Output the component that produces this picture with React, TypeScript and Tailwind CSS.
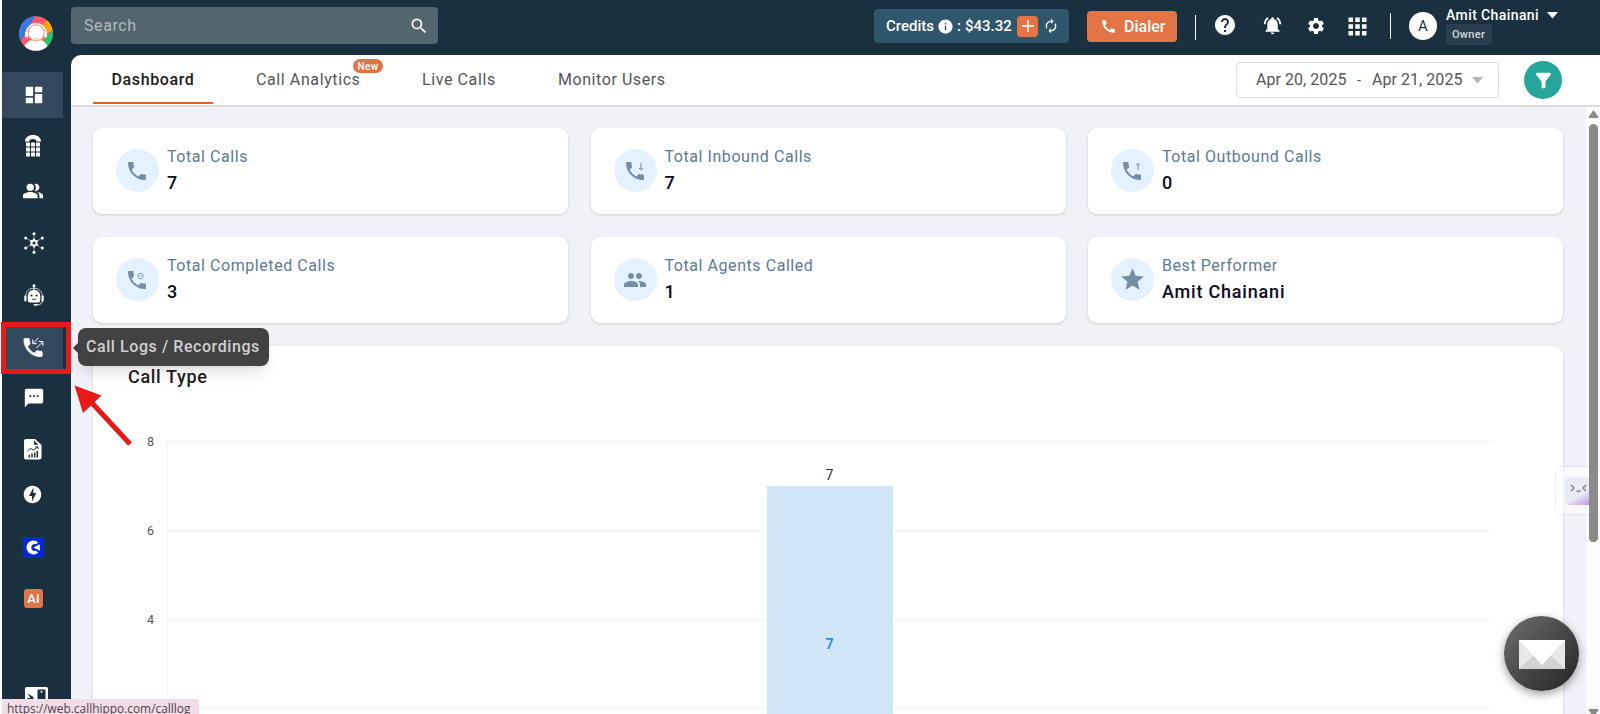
import React from 'react';
import {
  MdApps,
  MdAutorenew,
  MdCall,
  MdDashboard,
  MdFilterAlt,
  MdHelp,
  MdInfo,
  MdNotificationsActive,
  MdOfflineBolt,
  MdPeople,
  MdPeopleAlt,
  MdSearch,
  MdSettings,
  MdSms,
  MdStar,
} from 'react-icons/md';

const PHONE_PATH =
  'M6.62 10.79c1.44 2.83 3.76 5.14 6.59 6.59l2.2-2.2c.27-.27.67-.36 1.02-.24 1.12.37 2.33.57 3.57.57.55 0 1 .45 1 1V20c0 .55-.45 1-1 1-9.39 0-17-7.61-17-17 0-.55.45-1 1-1h3.5c.55 0 1 .45 1 1 0 1.25.2 2.45.57 3.57.11.35.03.74-.25 1.02l-2.2 2.2z';

const Logo: React.FC = () => (
  <svg width="34" height="35" viewBox="0 0 34 35">
    <defs>
      <clipPath id="logo-clip">
        <ellipse cx="17" cy="17.5" rx="17" ry="17.3" />
      </clipPath>
    </defs>
    <g clipPath="url(#logo-clip)">
      <rect width="34" height="35" fill="#ff5a6a" />
      <path d="M0 0h16L3 24H0z" fill="#3b78e7" />
      <path d="M30 2l4 8v5l-10 3-2-8z" fill="#ffa60d" />
      <path d="M34 13v22H20l6-13z" fill="#27c26c" />
      <path d="M5 32c1-6 6-8.500 12-8.500S28 26 29 32v3H5z" fill="#fff" />
      <path d="M7.200 18.500a9.800 10.500 0 0 1 19.800 0" fill="none" stroke="#fff" strokeWidth="1.800" />
      <rect x="6.300" y="15.500" width="3" height="6" rx="1.500" fill="#fff" />
      <rect x="25" y="15.500" width="3" height="6" rx="1.500" fill="#fff" />
      <circle cx="17.200" cy="16.800" r="8" fill="#fff" stroke="#ff7f7f" strokeWidth="0.900" />
      <path d="M25.500 20.500c-1 2.500-3 3.500-6 3.700" fill="none" stroke="#ffc04d" strokeWidth="0.800" />
      <rect x="15.500" y="22.300" width="4.500" height="2.200" rx="1.100" fill="#fff" stroke="#ffa64d" strokeWidth="0.600" />
    </g>
  </svg>
);

const KeypadIcon: React.FC = () => (
  <svg width="16" height="22" viewBox="0 0 16 22" fill="#fff">
    <path d="M0 6.500C0 2.500 3.500 0 8 0s8 2.500 8 6.500h-4.300C11.700 4.800 10 4 8 4s-3.700.8-3.700 2.500z" />
    {[7.4, 12.4, 17.4].map((y) =>
      [1, 6, 11].map((x) => <rect key={`${x}-${y}`} x={x} y={y} width="4" height="4" rx="0.500" />)
    )}
  </svg>
);

const HubIcon: React.FC = () => (
  <svg width="20" height="22" viewBox="0 0 20 22" fill="#fff" stroke="#fff">
    <path d="M10 2v18M2 6l16 10M18 6L2 16" strokeWidth="0.600" fill="none" opacity="0.800" />
    <path d="M10 6.500v9M6.100 8.700l7.800 4.600M13.900 8.700l-7.800 4.600" strokeWidth="1.800" fill="none" />
    <circle cx="10" cy="11" r="2.500" fill="#1b303f" strokeWidth="1.900" />
    <g stroke="none">
      <circle cx="10" cy="1.700" r="1.500" />
      <circle cx="10" cy="20.300" r="1.500" />
      <circle cx="1.700" cy="6" r="1.500" />
      <circle cx="18.300" cy="6" r="1.500" />
      <circle cx="1.700" cy="16" r="1.500" />
      <circle cx="18.300" cy="16" r="1.500" />
    </g>
  </svg>
);

const BotIcon: React.FC = () => (
  <svg width="20" height="22" viewBox="0 0 20 22" fill="#fff">
    <circle cx="10" cy="1.700" r="1.500" />
    <rect x="9.500" y="2" width="1" height="4" />
    <path d="M3.800 12.500C3.800 8 6.200 6 10 6s6.200 2 6.200 6.500v3.700c0 1.500-1 2.300-2.300 2.300H6.100c-1.300 0-2.300-.8-2.300-2.300z" />
    <path d="M1.700 12C2 7 5 4.300 10 4.300S18 7 18.300 12" fill="none" stroke="#fff" strokeWidth="0.700" />
    <rect x="0.300" y="11.500" width="2.200" height="6" rx="1" />
    <rect x="17.500" y="11.500" width="2.200" height="6" rx="1" />
    <circle cx="7.500" cy="11.500" r="1.100" fill="#1b303f" />
    <circle cx="12.500" cy="11.500" r="1.100" fill="#1b303f" />
    <path d="M8 15q2 1.200 4 0" fill="none" stroke="#1b303f" strokeWidth="0.900" />
    <path d="M18.200 17c0 3-3 4-7 4" fill="none" stroke="#fff" strokeWidth="0.900" />
    <rect x="9.500" y="20" width="4" height="1.600" rx="0.800" />
  </svg>
);

const CallLogIcon: React.FC = () => (
  <svg width="22" height="20" viewBox="0 0 22 20" fill="#fff">
    <path d={PHONE_PATH} transform="translate(-2.200 -1.600) scale(1.020)" stroke="#fff" strokeWidth="0.700" />
    <path
      d="M15.500 1L10 6.300M9.700 2.500v4.200h4.200M13.500 11L19.500 5M15.700 4.500h4.200v4.200"
      fill="none"
      stroke="#fff"
      strokeWidth="1"
    />
  </svg>
);

const ReportIcon: React.FC = () => (
  <svg width="18" height="21" viewBox="0 0 18 21">
    <path d="M2 0h9l6.500 6v12.500a2 2 0 0 1-2 2H2a2 2 0 0 1-2-2V2a2 2 0 0 1 2-2z" fill="#fff" />
    <path d="M10 1.500v4.300h4.500z" fill="#1b303f" />
    <path d="M3.500 12l3-2.500 3 1.500 4-3M11 8h3v2.500" fill="none" stroke="#1b303f" strokeWidth="1" />
    <path d="M5.300 18.500v-2.700M8 18.500v-4M10.700 18.500v-5M13.300 18.500v-6.500" stroke="#1b303f" strokeWidth="1.500" />
  </svg>
);

const BlueAppIcon: React.FC = () => (
  <svg width="21" height="21" viewBox="0 0 21 21">
    <rect width="21" height="21" rx="2" fill="#0528cf" />
    <circle cx="10.500" cy="10.500" r="7" fill="#fff" />
    <path d="M16 4.500l-3 2.700c-2.800-.7-4.700.8-4.700 3.300s1.900 4 4.700 3.300l3 2.700 3-1.500v-9z" fill="#0528cf" />
    <path d="M10.500 10.500l6.300-3.200v6.400z" fill="#fff" />
  </svg>
);

const AiIcon: React.FC = () => (
  <span className="flex h-[19px] w-[19px] items-center justify-center rounded-[3px] bg-[#e27446] text-[13px] font-medium leading-none text-white">
    AI
  </span>
);

const PanelIcon: React.FC = () => (
  <svg width="23" height="18" viewBox="0 0 23 18">
    <rect width="23" height="18" rx="1.500" fill="#fff" />
    <rect x="12.500" y="2.500" width="8" height="14" rx="1" fill="#1b303f" />
    <path d="M2.500 6.500L8.500 10v3H2.500v-2h3z" fill="#1b303f" />
    <circle cx="16.500" cy="4.800" r="1" fill="#fff" />
  </svg>
);

interface NavItem {
  icon: React.ReactNode;
  className?: string;
}

const navItems: NavItem[] = [
  { icon: <MdDashboard size={22} />, className: 'mt-px bg-[#34495e]' },
  { icon: <KeypadIcon />, className: 'mt-[4px] pr-px pt-px' },
  { icon: <MdPeopleAlt size={22} />, className: 'pr-px' },
  { icon: <HubIcon />, className: 'mt-[6px]' },
  { icon: <BotIcon />, className: 'mt-[6px]' },
  { icon: <CallLogIcon />, className: 'mt-[6px] bg-[#34495e]' },
  { icon: <MdSms size={22} />, className: 'mt-[5px]' },
  { icon: <ReportIcon />, className: 'mt-[5px] pr-[2px]' },
  { icon: <MdOfflineBolt size={21} />, className: '-mt-px pr-[2px]' },
  { icon: <BlueAppIcon />, className: 'mt-[7px]' },
  { icon: <AiIcon />, className: 'mt-[5px]' },
];

const Sidebar: React.FC = () => (
  <aside className="ml-[2px] flex w-[69px] shrink-0 flex-col text-white">
    <div className="flex h-[71px] shrink-0 items-start pl-[17px] pt-4">
      <Logo />
    </div>
    {navItems.map((item, i) => (
      <div key={i} className={`flex h-[46px] w-[61px] shrink-0 items-center justify-center pl-[2px] ${item.className ?? ''}`}>
        {item.icon}
      </div>
    ))}
    <div className="mt-[66px] pl-[23px]">
      <PanelIcon />
    </div>
  </aside>
);

const Header: React.FC = () => (
  <header className="flex h-[55px] shrink-0 items-start text-white">
    <div className="mt-[7px] flex h-[37px] w-[367px] items-center justify-between rounded-[4px] bg-[#53666f] pl-[13px] pr-[9px]">
      <span className="pt-px text-base tracking-[0.600px] text-[#b3babe]">Search</span>
      <MdSearch size={20} />
    </div>
    <div className="ml-[436px] mt-[9px] flex h-[34px] w-[195px] items-center rounded-[4px] bg-[#2f566b] pl-[12px] text-[15px] font-medium">
      <span className="w-[51px]">Credits</span>
      <MdInfo size={17} className="shrink-0" />
      <span className="ml-[3px] w-[8px]">:</span>
      <span className="w-[52px]">$43.32</span>
      <span className="flex h-[21px] w-[21px] shrink-0 items-center justify-center rounded-[4px] bg-[#e27446]">
        <svg width="12" height="12" viewBox="0 0 12 12" stroke="#fff" strokeWidth="1.500">
          <path d="M6 0v12M0 6h12" />
        </svg>
      </span>
      <MdAutorenew size={16} className="ml-[5px] shrink-0" />
    </div>
    <button className="ml-[18px] mt-[11px] flex h-[31px] w-[90px] items-center rounded-[4px] bg-[#e27446] pl-[13px] text-base font-medium">
      <MdCall size={17} />
      <span className="ml-[7px]">Dialer</span>
    </button>
    <span className="ml-[18px] mt-[15px] h-[25px] w-px bg-white" />
    <MdHelp size={24} className="ml-[17px] mt-[13px]" />
    <MdNotificationsActive size={21} className="ml-[25px] mt-[15px]" />
    <MdSettings size={20} className="ml-[23px] mt-4" />
    <MdApps size={27} className="ml-[18px] mt-[13px]" />
    <span className="ml-[19px] mt-[13px] h-[26px] w-px bg-white" />
    <span className="ml-[18px] mt-[12px] flex h-7 w-7 items-center justify-center rounded-full bg-white text-[15px] text-[#1b303f]">
      A
    </span>
    <div className="ml-[9px] mt-[6px] flex flex-col items-start">
      <div className="flex h-[18px] items-center">
        <span className="w-[101px] text-sm font-medium tracking-[0.400px]">Amit Chainani</span>
        <svg width="11" height="7" viewBox="0 0 11 7" fill="#fff">
          <path d="M0 0h11L5.500 6.500z" />
        </svg>
      </div>
      <span className="flex h-[21px] w-[46px] items-center justify-center rounded-[4px] bg-[#2a3f4b] pr-px pt-[2px] text-[11px] font-medium tracking-[0.300px] text-[#d5dadd]">
        Owner
      </span>
    </div>
  </header>
);

const TabBar: React.FC = () => (
  <div className="flex h-[52px] shrink-0 items-start rounded-tl-[10px] border-b-2 border-[#dcdcdf] bg-white pl-[22px] text-base tracking-[0.600px] text-[#555]">
    <div className="flex h-[49px] w-[120px] items-center justify-center border-b-2 border-[#e2651c] pt-[2px] font-medium text-[#1c1c1c]">
      Dashboard
    </div>
    <div className="relative ml-[43px] flex h-[49px] w-[166px] items-center">
      Call Analytics
      <span className="absolute left-[97px] top-[4px] flex h-[14px] w-[30px] items-center justify-center rounded-full bg-[#e27446] text-[10px] font-medium tracking-[0.300px] text-white">
        New
      </span>
    </div>
    <div className="flex h-[49px] w-[136px] items-center">Live Calls</div>
    <div className="flex h-[49px] items-center tracking-[0.560px]">Monitor Users</div>
    <div className="ml-auto mr-[38px] flex items-start pt-[6px]">
      <div className="mt-px flex h-[36px] w-[263px] items-center rounded-[4px] border border-[#dedede] pl-[19px] tracking-[0.050px]">
        <span className="w-[101px]">Apr 20, 2025</span>
        <span className="w-[15px] text-sm">-</span>
        <span className="w-[100px]">Apr 21, 2025</span>
        <svg width="11" height="7" viewBox="0 0 11 7" fill="#b5b5b5">
          <path d="M0 0h11L5.500 6.500z" />
        </svg>
      </div>
      <button className="ml-[25px] flex h-[38px] w-[38px] items-center justify-center rounded-full bg-[#26a69a] text-white">
        <MdFilterAlt size={23} />
      </button>
    </div>
  </div>
);

const CallGlyph: React.FC<{ children?: React.ReactNode }> = ({ children }) => (
  <svg width="24" height="24" viewBox="0 0 24 24" fill="#748ea6" className="mr-px">
    <path d={PHONE_PATH} />
    {children && (
      <g fill="none" stroke="#748ea6" strokeWidth="1">
        {children}
      </g>
    )}
  </svg>
);

interface Stat {
  label: string;
  value: string;
  icon: React.ReactNode;
}

const stats: Stat[] = [
  { label: 'Total Calls', value: '7', icon: <CallGlyph /> },
  { label: 'Total Inbound Calls', value: '7', icon: <CallGlyph><path d="M18 4v7M16 9l2 2 2-2" /></CallGlyph> },
  { label: 'Total Outbound Calls', value: '0', icon: <CallGlyph><path d="M18 11V4.500M16 6.500l2-2 2 2" /></CallGlyph> },
  {
    label: 'Total Completed Calls',
    value: '3',
    icon: (
      <CallGlyph>
        <circle cx="15.500" cy="8" r="2.800" strokeWidth="0.800" />
        <path d="M14 6.800l1.500 1.400 1.600-1" strokeWidth="0.700" />
      </CallGlyph>
    ),
  },
  { label: 'Total Agents Called', value: '1', icon: <MdPeople size={24} className="mr-px" /> },
  { label: 'Best Performer', value: 'Amit Chainani', icon: <MdStar size={27} className="mr-px" /> },
];

const StatCard: React.FC<Stat> = ({ label, value, icon }) => (
  <div className="flex h-[86px] rounded-[9px] bg-white pl-[23px] shadow-[0_1px_3px_rgba(0,0,0,0.150)]">
    <span className="mt-[21px] flex h-[43px] w-[43px] shrink-0 items-center justify-center rounded-full bg-[#e4f1ff] text-[#748ea6]">
      {icon}
    </span>
    <div className="ml-[8px] mt-[17px]">
      <div className="text-base leading-6 tracking-[0.560px] text-[#5c7a94]">{label}</div>
      <div className="text-lg font-medium leading-7 tracking-[0.800px] text-[#0b0b1a]">{value}</div>
    </div>
  </div>
);

const CallTypeChart: React.FC = () => (
  <section className="mt-[23px] h-[400px] rounded-[9px] bg-white pt-[17px] shadow-[0_1px_3px_rgba(0,0,0,0.150)]">
    <h2 className="ml-[35px] text-lg font-medium leading-7 tracking-[0.680px] text-[#1c1c1c]">Call Type</h2>
    <svg width="1470" height="320" viewBox="0 0 1470 320" className="mt-[24px]">
      {/* plot area */}
      <path d="M74.500 26v294M74 26.500h1327M74 115.500h1327M74 204.500h1327M74 292.500h1327" stroke="#f5f5f5" fill="none" />
      <g fontSize="12.500" fill="#555" textAnchor="middle">
        <text x="57.500" y="31">8</text>
        <text x="57.500" y="120">6</text>
        <text x="57.500" y="208.500">4</text>
      </g>
      <rect x="674" y="71" width="126" height="249" fill="#d1e6f7" />
      <text x="736.500" y="64.500" fontSize="14" fill="#333" textAnchor="middle">7</text>
      <text x="736.500" y="234" fontSize="14" fontWeight="700" fill="#2196f3" textAnchor="middle">7</text>
    </svg>
  </section>
);

const Scrollbar: React.FC = () => (
  <div className="flex w-[14px] shrink-0 flex-col items-center bg-[#fcfcfc] pt-[3px]">
    <svg width="11" height="8" viewBox="0 0 11 8" fill="#8b8b8b" className="shrink-0">
      <path d="M5.500 0L10.500 7q0 1-1 1h-8q-1 0-1-1z" />
    </svg>
    <span className="mt-[6px] ml-px h-[418px] w-[9px] shrink-0 rounded-full bg-[#8b8b8b]" />
    <svg width="11" height="8" viewBox="0 0 11 8" fill="#8b8b8b" className="mt-[167px] shrink-0">
      <path d="M5.500 8L10.500 1q0-1-1-1h-8q-1 0-1 1z" />
    </svg>
  </div>
);

const Tooltip: React.FC = () => (
  <div className="absolute left-[78px] top-[328px] z-30 flex h-[38px] w-[191px] items-center rounded-[8px] bg-[#383838]/95 pl-[8px] text-base font-medium tracking-[0.570px] whitespace-nowrap text-[#d0d0d0] shadow-lg">
    <svg width="5" height="10" viewBox="0 0 5 10" fill="#3d3d3d" className="absolute -left-[5px] top-[15px]">
      <path d="M5 0v10L0 5z" />
    </svg>
    Call Logs / Recordings
  </div>
);

const App: React.FC = () => (
  <div className="relative h-[714px] w-[1600px] overflow-hidden bg-white font-['Roboto',sans-serif]">
    <div className="flex h-full bg-[linear-gradient(to_right,#fff_2px,#1b303f_2px)]">
      <Sidebar />
      <div className="flex min-w-0 flex-1 flex-col">
        <Header />
        <TabBar />
        <div className="flex min-h-0 flex-1 overflow-hidden bg-[#f1f2f7]">
          <main className="flex-1 pl-[22px] pr-[23px] pt-[21px]">
            <div className="grid grid-cols-3 gap-x-[22.500px] gap-y-[23px]">
              {stats.map((s) => (
                <StatCard key={s.label} {...s} />
              ))}
            </div>
            <CallTypeChart />
          </main>
          <Scrollbar />
        </div>
      </div>
    </div>

    {/* highlighted nav entry */}
    <div className="absolute left-[1px] top-[322px] z-20 h-[52px] w-[70px] border-[5px] border-[#e81919]" />
    <Tooltip />
    <svg width="60" height="62" viewBox="0 0 60 62" className="absolute left-[74px] top-[385px] z-20">
      <path d="M18 18l38 41" stroke="#e81919" strokeWidth="5" />
      <path d="M0.500 0.500l27 10-18.500 17.500z" fill="#e81919" />
    </svg>

    {/* assistant handle */}
    <div className="absolute left-[1556px] top-[467px] flex h-[47px] w-[44px] items-start rounded-l-[6px] bg-white/50 pl-[9px] pt-[10px] shadow-[0_0_3px_rgba(0,0,0,0.120)]">
      <span className="flex h-[28px] w-[28px] shrink-0 items-start justify-center rounded-[4px] bg-[linear-gradient(150deg,#e9ebf2_60%,#b48ae6_100%)] pt-[7px] pr-px">
        <svg width="17" height="9" viewBox="0 0 17 9" fill="none" stroke="#858a9b" strokeWidth="1.600">
          <path d="M1 1l3 3-3 3M16 1l-3 3 3 3M6.500 6.500q2 2 4 0" />
        </svg>
      </span>
    </div>
    <span className="absolute left-[1589px] top-[460px] h-[82px] w-[9px] rounded-b-full bg-[#8b8b8b]" />

    <button className="absolute left-[1504px] top-[616px] flex h-[75px] w-[75px] items-center justify-center rounded-full bg-linear-to-br from-[#707070] to-[#242424] shadow-[0_3px_10px_rgba(0,0,0,0.400)]">
      <svg width="46" height="29" viewBox="0 0 46 29" className="mt-px">
        <rect width="46" height="29" fill="#e8e8e8" />
        <path d="M0 29l16-15h14l16 15z" fill="#d2d2d2" />
        <path d="M0 0h46L23 25z" fill="#fff" />
      </svg>
    </button>

    {/* browser link preview */}
    <div className="absolute left-[2px] top-[699px] z-30 h-[22px] w-[197px] rounded-tr-[3px] bg-[#f2dce5] pl-[5px] pt-px font-['Open_Sans',sans-serif] text-[11.900px] leading-[17px] whitespace-nowrap text-[#4c4450]">
      https://web.callhippo.com/calllog
    </div>
  </div>
);

export default App;
